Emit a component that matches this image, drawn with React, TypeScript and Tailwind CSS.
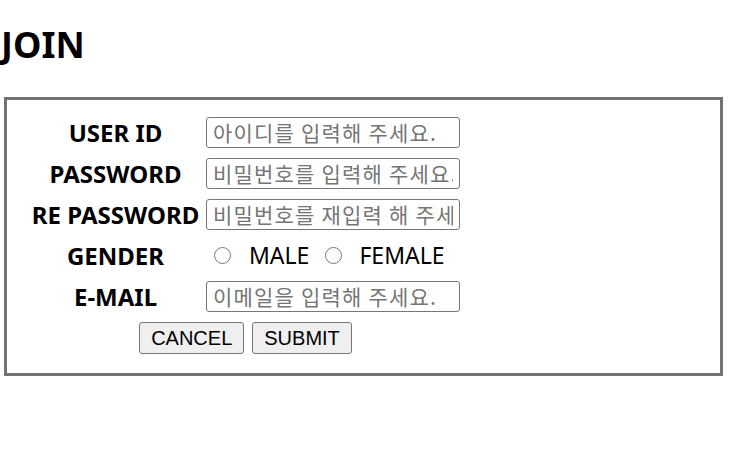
import { useState } from "react";

const font = "font-['Noto_Sans','Noto_Sans_CJK_KR',sans-serif]";

function Row({ label, children }: { label: string; children: React.ReactNode }) {
  return (
    <>
      <div className="h-[41px] flex items-center justify-center text-[24px] font-bold text-black whitespace-nowrap">
        {label}
      </div>
      <div className="h-[41px] flex items-center">{children}</div>
    </>
  );
}

function TextInput({ type = "text", placeholder }: { type?: string; placeholder: string }) {
  return (
    <input
      type={type}
      placeholder={placeholder}
      className="w-[254px] h-[31px] border border-[#767676] rounded-[3px] px-[6px] text-[21px] tracking-[1.2px] font-['Noto_Sans_CJK_KR',sans-serif] placeholder:text-[#757575] outline-none"
    />
  );
}

export default function App() {
  const [gender, setGender] = useState("");

  return (
    <div className={`${font} bg-white min-h-[465px] text-black`}>
      <h1 className="pt-[23px] pl-[1px] text-[36px] leading-[44px] font-bold">JOIN</h1>
      <div className="mt-[30px] mx-[4px] w-[719px] h-[279px] border-[3px] border-[#727272] pl-[21px] pt-[12px]">
        <div className="grid grid-cols-[175px_257px] gap-x-[3px]">
          <Row label="USER ID">
            <TextInput placeholder="아이디를 입력해 주세요." />
          </Row>
          <Row label="PASSWORD">
            <TextInput type="password" placeholder="비밀번호를 입력해 주세요." />
          </Row>
          <Row label="RE PASSWORD">
            <TextInput type="password" placeholder="비밀번호를 재입력 해 주세요." />
          </Row>
          <Row label="GENDER">
            <label className="flex items-center ml-[8px] text-[23px]">
              <input
                type="radio"
                name="gender"
                checked={gender === "male"}
                onChange={() => setGender("male")}
                className="appearance-none w-[17px] h-[17px] m-0 rounded-full border-[1.5px] border-[#767676] checked:bg-[#767676]"
              />
              <span className="ml-[18px]">MALE</span>
            </label>
            <label className="flex items-center ml-[16px] text-[23px]">
              <input
                type="radio"
                name="gender"
                checked={gender === "female"}
                onChange={() => setGender("female")}
                className="appearance-none w-[17px] h-[17px] m-0 rounded-full border-[1.5px] border-[#767676] checked:bg-[#767676]"
              />
              <span className="ml-[17px]">FEMALE</span>
            </label>
          </Row>
          <Row label="E-MAIL">
            <TextInput type="email" placeholder="이메일을 입력해 주세요." />
          </Row>
          <div className="col-span-2 h-[41px] flex items-center justify-center gap-[8px]">
            <button
              type="button"
              className="h-[32px] px-[11px] bg-[#efefef] border border-[#767676] rounded-[3px] text-[20px] font-['Liberation_Sans',Arial,sans-serif]"
            >
              CANCEL
            </button>
            <button
              type="submit"
              className="h-[32px] px-[11px] bg-[#efefef] border border-[#767676] rounded-[3px] text-[20px] font-['Liberation_Sans',Arial,sans-serif]"
            >
              SUBMIT
            </button>
          </div>
        </div>
      </div>
    </div>
  );
}
